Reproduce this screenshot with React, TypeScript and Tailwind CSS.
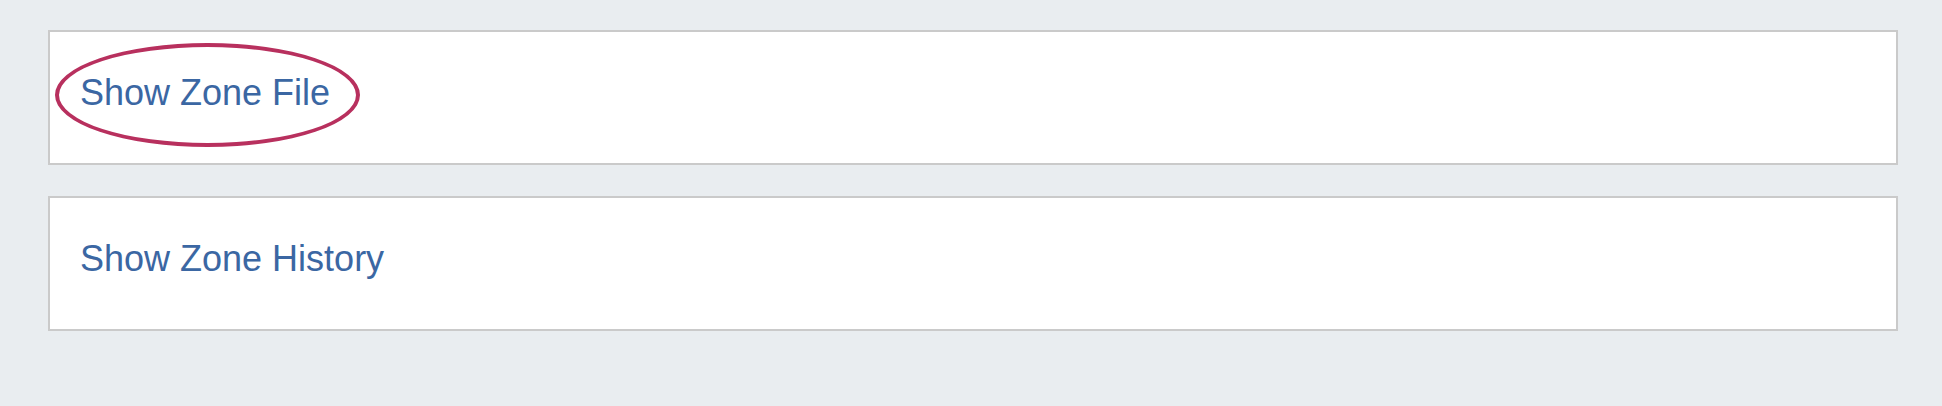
const cards = ["Show Zone File", "Show Zone History"];

const App = () => {
  return (
    <div className="min-h-[406px] bg-[#e9edf0] pt-[30px] pl-[48px] pb-[75px] font-['Liberation_Sans',Arial,sans-serif]">
      <div className="flex flex-col gap-[31px] w-[1850px]">
        {cards.map((label, i) => (
          <div
            key={label}
            className="relative h-[135px] bg-white border-2 border-[#cacaca] pl-[30px] pt-[41px]"
          >
            <a href="#" className="text-[36px] leading-[40px] text-[#3b67a3]">
              {label}
            </a>
            {i === 0 && (
              <div className="absolute left-[5px] top-[11px] w-[305px] h-[104px] rounded-[50%] border-4 border-[#b8305e] pointer-events-none" />
            )}
          </div>
        ))}
      </div>
    </div>
  );
};

export default App;
